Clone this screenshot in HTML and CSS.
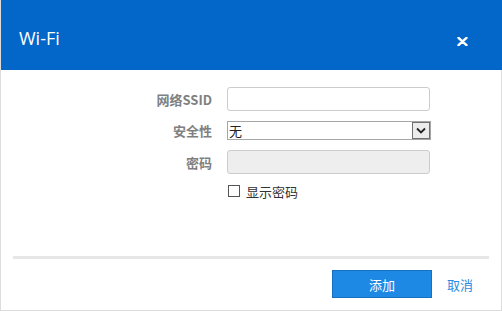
FILE: index.html
```html
<!DOCTYPE html>
<html lang="zh-CN">
<head>
  <meta charset="UTF-8">
  <meta name="viewport" content="width=device-width, initial-scale=1.0">
  <title>Wi-Fi</title>
  <link rel="stylesheet" href="styles.css">
</head>
<body>
  <div class="dialog">
    <div class="dialog-header">
      <h1>Wi-Fi</h1>
      <button class="close" type="button" aria-label="关闭">
        <svg width="11" height="9" viewBox="0 0 11 9"><path d="M1.5 0.8 L9.5 8.2 M9.5 0.8 L1.5 8.2" stroke="#fff" stroke-width="2.4" stroke-linecap="round"/></svg>
      </button>
    </div>
    <form class="dialog-body" id="wifiForm">
      <label class="form-label" for="ssid">网络SSID</label>
      <input id="ssid" class="form-input" type="text">

      <label class="form-label" for="security">安全性</label>
      <select id="security" class="form-select">
        <option value="none" selected>无</option>
        <option value="wpa2">WPA2-PSK</option>
      </select>

      <label class="form-label" for="password">密码</label>
      <input id="password" class="form-input" type="password" disabled>

      <span></span>
      <label class="show-pass"><input type="checkbox"> 显示密码</label>
    </form>
    <div class="divider"></div>
    <div class="dialog-footer">
      <button type="submit" form="wifiForm" class="btn">添加</button>
      <a href="#" class="link">取消</a>
    </div>
  </div>
</body>
</html>
```

FILE: styles.css
```css
body {
  margin: 0;
  font-family: "Noto Sans CJK SC", "Noto Sans", sans-serif;
  background: #ffffff;
}
.dialog {
  width: 502px;
  height: 311px;
  box-sizing: border-box;
  border: 1px solid #dcdcdc;
  border-top: none;
  display: flex;
  flex-direction: column;
}
.dialog-header {
  height: 70px;
  background-color: #0366c9;
  margin: 0 -1px 0 0;
  display: flex;
  align-items: center;
  justify-content: space-between;
  padding: 0 34px 0 18px;
}
.dialog-header h1 {
  margin: 0;
  font-family: "Open Sans", "Noto Sans", sans-serif;
  font-size: 18px;
  font-weight: normal;
  color: #ffffff;
  padding-top: 6px;
}
.close {
  background: none;
  border: none;
  padding: 0;
  margin-top: 12px;
  cursor: pointer;
  display: flex;
}
.dialog-body {
  display: grid;
  grid-template-columns: 211px 203px;
  column-gap: 15px;
  row-gap: 10px;
  align-items: center;
  padding-top: 17px;
  margin: 0;
}
.form-label {
  text-align: right;
  font-size: 13px;
  font-weight: bold;
  color: #808080;
}
.form-input {
  box-sizing: border-box;
  height: 24px;
  width: 203px;
  border: 1px solid #cccccc;
  border-radius: 3px;
  padding: 2px 6px;
  font-size: 13px;
}
.form-input:disabled {
  background-color: #eeeeee;
}
.form-select {
  box-sizing: border-box;
  height: 19px;
  width: 204px;
  border: 1px solid #a6a6a6;
  border-radius: 0;
  padding: 0 0 0 1px;
  font-family: "Noto Sans CJK SC", sans-serif;
  font-size: 13px;
  line-height: 17px;
  color: #222222;
  appearance: none;
  background: #ffffff url('data:image/svg+xml;charset=US-ASCII,%3Csvg xmlns%3D%22http%3A//www.w3.org/2000/svg%22 width%3D%2218%22 height%3D%2217%22%3E%3Crect x%3D%220.5%22 y%3D%220.5%22 width%3D%2217%22 height%3D%2216%22 fill%3D%22%23ececec%22 stroke%3D%22%23707070%22/%3E%3Cpath d%3D%22M5 6.5 L9 10.5 L13 6.5%22 fill%3D%22none%22 stroke%3D%22%23222%22 stroke-width%3D%221.8%22/%3E%3C/svg%3E') no-repeat right 0 center;
}
.show-pass {
  display: flex;
  align-items: center;
  gap: 6px;
  font-size: 13px;
  color: #333333;
  height: 14px;
}
.show-pass input {
  appearance: none;
  margin: 0 0 0 1px;
  width: 12px;
  height: 12px;
  border: 1px solid #555555;
  background: #ffffff;
}
.divider {
  margin: auto 12px 0;
  height: 3px;
  background-color: #e6e6e6;
}
.dialog-footer {
  display: flex;
  justify-content: flex-end;
  align-items: center;
  gap: 15px;
  padding: 11px 28px 12px 0;
}
.btn {
  width: 100px;
  height: 28px;
  background-color: #1e88e5;
  border: 1px solid #1670c4;
  color: #ffffff;
  font-family: "Noto Sans CJK SC", sans-serif;
  font-size: 13px;
  cursor: pointer;
}
.link {
  color: #2e8ae0;
  font-size: 13px;
  text-decoration: none;
}
```
